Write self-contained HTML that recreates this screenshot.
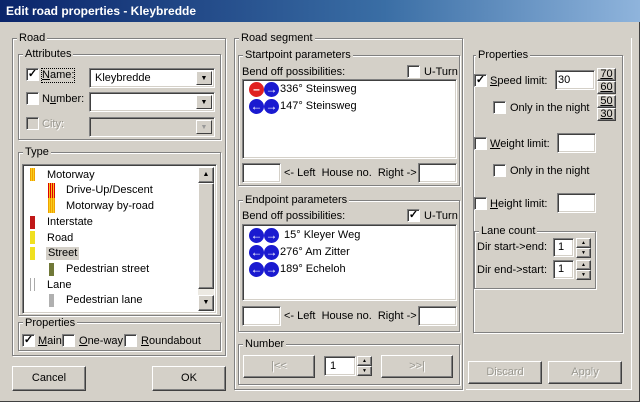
<!DOCTYPE html>
<html><head><meta charset="utf-8"><style>
*{box-sizing:border-box;margin:0;padding:0}
body{width:640px;height:402px;background:#d4d0c8;font-family:"Liberation Sans",sans-serif;font-size:11px;color:#000;position:relative;overflow:hidden}
.a{position:absolute}
.title{left:0;top:0;width:640px;height:22px;background:linear-gradient(90deg,#0a246a,#3a6ea5 60%,#8fb4dc);color:#fff;font-weight:bold;font-size:12px;line-height:22px;padding-left:6px}
.win{left:0;top:22px;width:640px;height:380px;border-right:1px solid #404040;border-bottom:1px solid #404040}
.grp{position:absolute;border:1px solid #808080;box-shadow:1px 1px 0 #fff inset,1px 1px 0 #fff}
.lbl{position:absolute;background:#d4d0c8;padding:0 2px;line-height:12px;white-space:nowrap}
.sunk{position:absolute;background:#fff;border:1px solid;border-color:#808080 #fff #fff #808080;box-shadow:inset 1px 1px 0 #404040,inset -1px -1px 0 #d4d0c8}
.dis{background:#d4d0c8}
.cb{position:absolute;width:13px;height:13px;background:#fff;border:1px solid;border-color:#808080 #fff #fff #808080;box-shadow:inset 1px 1px 0 #404040;font-size:11px;line-height:10px;text-align:center;font-weight:bold}
.btn{position:absolute;background:#d4d0c8;border:1px solid;border-color:#fff #404040 #404040 #fff;box-shadow:inset -1px -1px 0 #808080;text-align:center;white-space:nowrap}
.t{position:absolute;white-space:nowrap;line-height:13px}
.g{color:#9a9890;text-shadow:1px 1px 0 #fff}
.dd{position:absolute;right:2px;top:2px;width:16px;bottom:2px;background:#d4d0c8;border:1px solid;border-color:#fff #404040 #404040 #fff;font-size:7px;text-align:center;line-height:13px}
.ic{position:absolute;width:15px;height:15px;border-radius:50%;background:#1a1ad0;color:#fff;font-size:12px;line-height:14px;text-align:center;font-weight:bold}
.bar{position:absolute;width:5px;height:13px}
</style></head><body>
<div class="a title">Edit road properties - Kleybredde</div>
<div class="a win"></div>

<div class="grp" style="left:12px;top:38px;width:214px;height:318px"></div>
<div class="lbl" style="left:17px;top:32px">Road</div>
<div class="grp" style="left:18px;top:54px;width:203px;height:86px"></div>
<div class="lbl" style="left:23px;top:48px">Attributes</div>
<div class="cb" style="left:26px;top:68px">✓</div><div class="t" style="left:42px;top:69px;outline:1px dotted #000"><u>N</u>ame:</div>
<div class="sunk" style="left:89px;top:68px;width:126px;height:20px"><span class="t" style="left:5px;top:3px">Kleybredde</span><div class="dd">▼</div></div>
<div class="cb" style="left:26px;top:92px"></div><div class="t" style="left:42px;top:93px">N<u>u</u>mber:</div>
<div class="sunk" style="left:89px;top:92px;width:126px;height:20px"><div class="dd">▼</div></div>
<div class="cb dis" style="left:26px;top:117px;background:#d4d0c8"></div><div class="t g" style="left:42px;top:118px">City:</div>
<div class="sunk dis" style="left:89px;top:117px;width:126px;height:20px;background:#d4d0c8"><div class="dd" style="color:#999">▼</div></div>

<div class="grp" style="left:18px;top:152px;width:203px;height:164px"></div>
<div class="lbl" style="left:23px;top:146px">Type</div>
<div class="sunk" style="left:22px;top:164px;width:195px;height:150px;overflow:hidden">
 <div style="position:absolute;right:2px;top:2px;width:16px;bottom:2px;background:#ece9e2"></div>
 <div class="btn" style="right:2px;top:2px;width:16px;height:16px;font-size:7px;line-height:14px">▲</div>
 <div class="btn" style="right:2px;top:18px;width:16px;height:106px"></div>
 <div class="btn" style="right:2px;bottom:2px;width:16px;height:16px;font-size:7px;line-height:14px">▼</div>
 <div class="bar" style="left:7px;top:3px;background:repeating-linear-gradient(90deg,#f0a000 0 1px,#f8d020 1px 2px)"></div><span class="t" style="left:24px;top:4px">Motorway</span>
 <div class="bar" style="left:25px;top:18px;width:7px;height:15px;background:repeating-linear-gradient(90deg,#d00 0 1px,#f8c020 1px 2px)"></div><span class="t" style="left:43px;top:19px">Drive-Up/Descent</span>
 <div class="bar" style="left:25px;top:33px;width:7px;height:15px;background:repeating-linear-gradient(90deg,#f0a000 0 1px,#f8d020 1px 2px)"></div><span class="t" style="left:43px;top:35px">Motorway by-road</span>
 <div class="bar" style="left:7px;top:51px;background:#c01818"></div><span class="t" style="left:24px;top:51px">Interstate</span>
 <div class="bar" style="left:7px;top:66px;background:#f0e020"></div><span class="t" style="left:24px;top:67px">Road</span>
 <div class="bar" style="left:7px;top:82px;background:#f0e020"></div><span class="t" style="left:23px;top:82px;background:#d4d0c8;padding:0 2px">Street</span>
 <div class="bar" style="left:26px;top:98px;background:#707838"></div><span class="t" style="left:43px;top:98px">Pedestrian street</span>
 <div class="bar" style="left:7px;top:113px;border-left:1px solid #aaa;border-right:1px solid #aaa"></div><span class="t" style="left:24px;top:114px">Lane</span>
 <div class="bar" style="left:26px;top:129px;background:#b0b0b0"></div><span class="t" style="left:43px;top:129px">Pedestrian lane</span>
</div>

<div class="grp" style="left:18px;top:322px;width:203px;height:29px"></div>
<div class="lbl" style="left:23px;top:317px">Properties</div>
<div class="cb" style="left:22px;top:334px">✓</div><div class="t" style="left:38px;top:335px"><u>M</u>ain</div>
<div class="cb" style="left:62px;top:334px"></div><div class="t" style="left:79px;top:335px"><u>O</u>ne-way</div>
<div class="cb" style="left:124px;top:334px"></div><div class="t" style="left:141px;top:335px"><u>R</u>oundabout</div>

<div class="btn" style="left:12px;top:366px;width:74px;height:25px;line-height:23px">Cancel</div>
<div class="btn" style="left:152px;top:366px;width:74px;height:25px;line-height:23px">OK</div>

<div class="grp" style="left:234px;top:38px;width:229px;height:352px"></div>
<div class="lbl" style="left:239px;top:32px">Road segment</div>
<div class="grp" style="left:238px;top:55px;width:222px;height:131px"></div>
<div class="lbl" style="left:243px;top:49px">Startpoint parameters</div>
<div class="t" style="left:242px;top:66px">Bend off possibilities:</div>
<div class="cb" style="left:407px;top:65px"></div><div class="t" style="left:424px;top:66px">U-Turn</div>
<div class="sunk" style="left:242px;top:79px;width:215px;height:80px">
 <div class="ic" style="left:6px;top:2px;background:#e02020">–</div><div class="ic" style="left:21px;top:2px">→</div><span class="t" style="left:37px;top:3px">336° Steinsweg</span>
 <div class="ic" style="left:6px;top:19px">←</div><div class="ic" style="left:21px;top:19px">→</div><span class="t" style="left:37px;top:20px">147° Steinsweg</span>
</div>
<div class="sunk" style="left:242px;top:163px;width:39px;height:20px"></div>
<div class="t" style="left:284px;top:167px">&lt;- Left&nbsp; House no.&nbsp; Right -&gt;</div>
<div class="sunk" style="left:418px;top:163px;width:39px;height:20px"></div>

<div class="grp" style="left:238px;top:200px;width:222px;height:132px"></div>
<div class="lbl" style="left:243px;top:194px">Endpoint parameters</div>
<div class="t" style="left:242px;top:210px">Bend off possibilities:</div>
<div class="cb" style="left:407px;top:209px">✓</div><div class="t" style="left:424px;top:210px">U-Turn</div>
<div class="sunk" style="left:242px;top:224px;width:215px;height:77px">
 <div class="ic" style="left:6px;top:3px">←</div><div class="ic" style="left:21px;top:3px">→</div><span class="t" style="left:41px;top:4px">15° Kleyer Weg</span>
 <div class="ic" style="left:6px;top:20px">←</div><div class="ic" style="left:21px;top:20px">→</div><span class="t" style="left:37px;top:21px">276° Am Zitter</span>
 <div class="ic" style="left:6px;top:37px">←</div><div class="ic" style="left:21px;top:37px">→</div><span class="t" style="left:37px;top:38px">189° Echeloh</span>
</div>
<div class="sunk" style="left:242px;top:306px;width:39px;height:20px"></div>
<div class="t" style="left:284px;top:310px">&lt;- Left&nbsp; House no.&nbsp; Right -&gt;</div>
<div class="sunk" style="left:418px;top:306px;width:39px;height:20px"></div>

<div class="grp" style="left:238px;top:344px;width:222px;height:41px"></div>
<div class="lbl" style="left:243px;top:338px">Number</div>
<div class="btn g" style="left:243px;top:355px;width:72px;height:23px;line-height:21px">|&lt;&lt;</div>
<div class="sunk" style="left:324px;top:356px;width:32px;height:20px"><span class="t" style="left:5px;top:3px">1</span></div>
<div class="btn" style="left:357px;top:356px;width:15px;height:10px;font-size:5px;line-height:8px">▲</div>
<div class="btn" style="left:357px;top:366px;width:15px;height:10px;font-size:5px;line-height:8px">▼</div>
<div class="btn g" style="left:381px;top:355px;width:72px;height:23px;line-height:21px">&gt;&gt;|</div>

<div class="grp" style="left:466px;top:38px;width:166px;height:352px;border-top:none;border-left:none;box-shadow:none;border-color:#fff"></div>
<div class="grp" style="left:473px;top:55px;width:150px;height:278px"></div>
<div class="lbl" style="left:476px;top:49px">Properties</div>
<div class="cb" style="left:474px;top:74px">✓</div><div class="t" style="left:490px;top:75px"><u>S</u>peed limit:</div>
<div class="sunk" style="left:555px;top:70px;width:40px;height:20px"><span class="t" style="left:2px;top:3px">30</span></div>
<div class="btn" style="left:597px;top:68px;width:19px;height:13px;line-height:11px"><u>70</u></div>
<div class="btn" style="left:597px;top:81px;width:19px;height:13px;line-height:11px"><u>60</u></div>
<div class="btn" style="left:597px;top:95px;width:19px;height:13px;line-height:11px"><u>50</u></div>
<div class="btn" style="left:597px;top:108px;width:19px;height:13px;line-height:11px"><u>30</u></div>
<div class="cb" style="left:493px;top:101px"></div><div class="t" style="left:510px;top:102px">Only in the night</div>
<div class="cb" style="left:474px;top:137px"></div><div class="t" style="left:490px;top:138px"><u>W</u>eight limit:</div>
<div class="sunk" style="left:557px;top:133px;width:39px;height:20px"></div>
<div class="cb" style="left:493px;top:164px"></div><div class="t" style="left:510px;top:165px">Only in the night</div>
<div class="cb" style="left:474px;top:197px"></div><div class="t" style="left:490px;top:198px"><u>H</u>eight limit:</div>
<div class="sunk" style="left:557px;top:193px;width:39px;height:20px"></div>
<div class="grp" style="left:474px;top:231px;width:122px;height:58px"></div>
<div class="lbl" style="left:479px;top:225px">Lane count</div>
<div class="t" style="left:477px;top:241px">Dir start-&gt;end:</div>
<div class="sunk" style="left:553px;top:238px;width:21px;height:19px"><span class="t" style="left:4px;top:2px">1</span></div>
<div class="btn" style="left:576px;top:238px;width:15px;height:10px;font-size:5px;line-height:8px">▲</div>
<div class="btn" style="left:576px;top:248px;width:15px;height:10px;font-size:5px;line-height:8px">▼</div>
<div class="t" style="left:477px;top:264px">Dir end-&gt;start:</div>
<div class="sunk" style="left:553px;top:260px;width:21px;height:19px"><span class="t" style="left:4px;top:2px">1</span></div>
<div class="btn" style="left:576px;top:260px;width:15px;height:10px;font-size:5px;line-height:8px">▲</div>
<div class="btn" style="left:576px;top:270px;width:15px;height:10px;font-size:5px;line-height:8px">▼</div>

<div class="btn g" style="left:468px;top:361px;width:74px;height:23px;line-height:21px">Discard</div>
<div class="btn g" style="left:548px;top:361px;width:74px;height:23px;line-height:21px">Apply</div>
</body></html>
